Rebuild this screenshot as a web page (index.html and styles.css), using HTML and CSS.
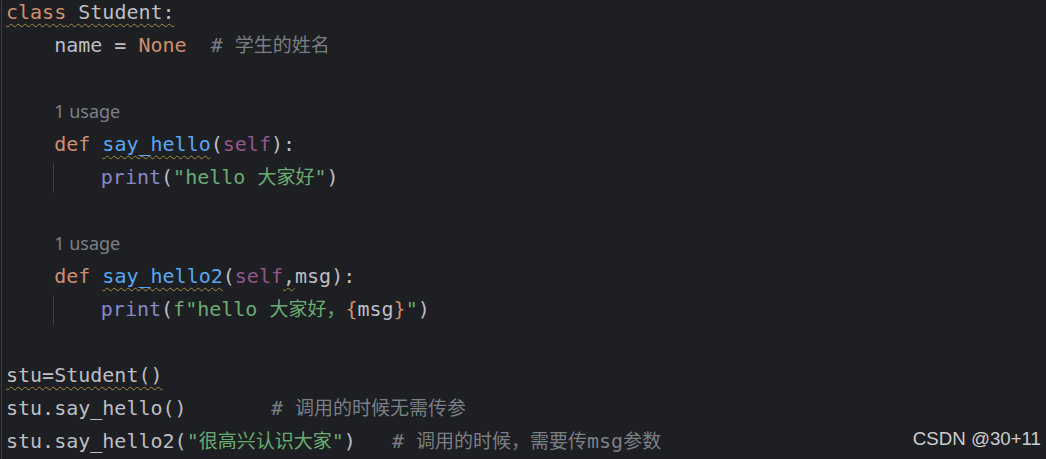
FILE: index.html
```html
<!DOCTYPE html>
<html>
<head>
<meta charset="utf-8">
<link rel="stylesheet" href="styles.css">
</head>
<body>
<div class="editor">
  <div class="code">
    <div class="line"><span class="wavy"><span class="kw">class</span> Student:</span></div>
    <div class="line">    name = <span class="kw">None</span>  <span class="cm"># <span class="cjk">学生的姓名</span></span></div>
    <div class="line"></div>
    <div class="line">    <span class="hint">1 usage</span></div>
    <div class="line">    <span class="kw">def</span> <span class="fn wavy">say_hello</span>(<span class="self">self</span>):</div>
    <div class="line">    <span class="guide"></span><span class="bi">print</span>(<span class="str">"hello <span class="cjk">大家好</span>"</span>)</div>
    <div class="line"></div>
    <div class="line">    <span class="hint">1 usage</span></div>
    <div class="line">    <span class="kw">def</span> <span class="fn wavy">say_hello2</span>(<span class="self">self</span><span class="wavy">,</span>msg):</div>
    <div class="line">    <span class="guide"></span><span class="bi">print</span>(<span class="str">f"hello <span class="cjk">大家好，</span></span><span class="kw">{</span>msg<span class="kw">}</span><span class="str">"</span>)</div>
    <div class="line"></div>
    <div class="line"><span class="wavy">stu=Student()</span></div>
    <div class="line">stu.say_hello()       <span class="cm"># <span class="cjk">调用的时候无需传参</span></span></div>
    <div class="line">stu.say_hello2(<span class="str">"<span class="cjk">很高兴认识大家</span>"</span>)   <span class="cm"># <span class="cjk">调用的时候，需要传</span>msg<span class="cjk">参数</span></span></div>
  </div>
  <div class="watermark">CSDN @30+11</div>
</div>
</body>
</html>
```

FILE: styles.css
```css
html, body {
  margin: 0;
  padding: 0;
  background: #1e1f22;
  overflow: hidden;
}

.editor {
  position: relative;
  height: 459px;
  margin-left: 1px;
  border-left: 1px solid #393b40;
  overflow: hidden;
}

.code {
  margin-top: -4px;
  padding-left: 4px;
  font-family: "DejaVu Sans Mono", "Noto Sans CJK SC", monospace;
  font-size: 20px;
  color: #bcbec4;
}

.line {
  height: 33px;
  line-height: 33px;
  white-space: pre;
}

.guide {
  display: inline-block;
  vertical-align: top;
  box-sizing: border-box;
  width: 48.16px;
  height: 30px;
  margin: 2px 0 0 -1.5px;
  padding-left: 1.5px;
  border-left: 1px solid #3c3e43;
}

.cjk {
  font-family: "Noto Sans CJK SC", sans-serif;
  font-size: 19px;
  line-height: 0;
}

.kw { color: #cf8e6d; }
.fn { color: #56a8f5; }
.self { color: #94558d; }
.bi { color: #8888c6; }
.str { color: #6aab73; }
.cm { color: #7a7e85; }

.hint {
  font-family: "Noto Sans", sans-serif;
  font-size: 18px;
  line-height: 0;
  color: #7c7f86;
}

.wavy {
  text-decoration: underline wavy #a08d3e;
  text-decoration-thickness: 1px;
  text-underline-offset: 4px;
  text-decoration-skip-ink: none;
}

.watermark {
  position: absolute;
  right: 5px;
  bottom: 11px;
  font-family: "Liberation Sans", Arial, sans-serif;
  font-size: 18.7px;
  line-height: 18px;
  color: #cdcdcd;
}
```
